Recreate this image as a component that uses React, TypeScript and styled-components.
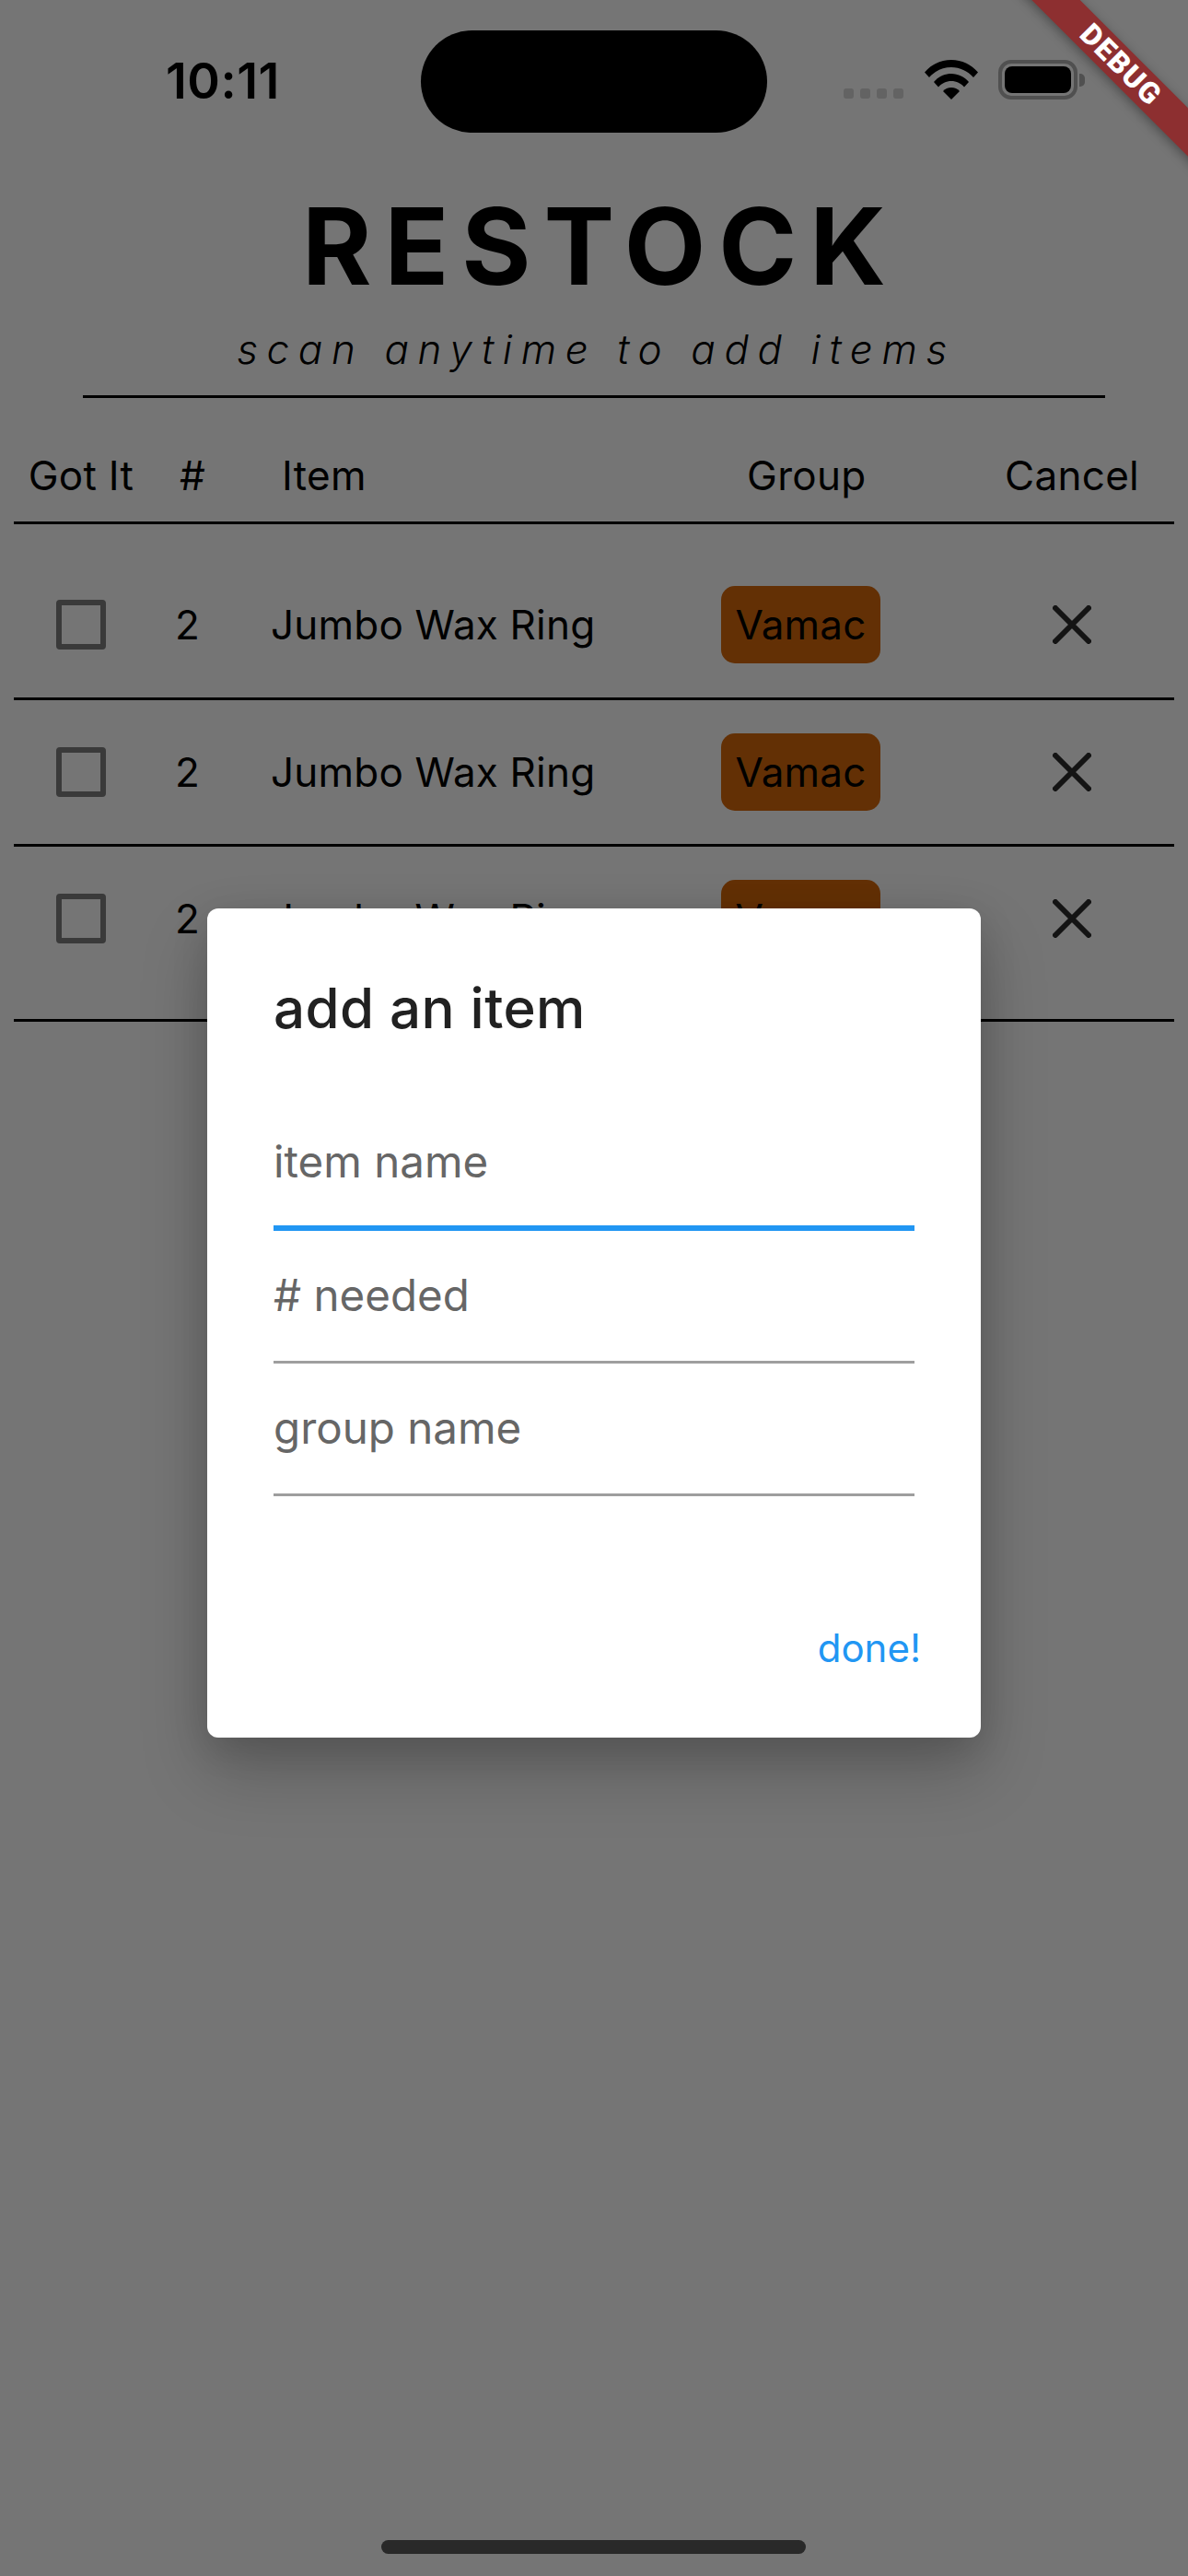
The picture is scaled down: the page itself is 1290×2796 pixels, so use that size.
import React from "react";
import styled, { createGlobalStyle } from "styled-components";

const Global = createGlobalStyle`
  html, body { margin: 0; padding: 0; background: #757575; }
  * { box-sizing: border-box; }
`;

const Screen = styled.div`
  position: relative;
  width: 1290px;
  height: 2796px;
  overflow: hidden;
  background: #757575;
  color: #000;
  font-family: Inter, "Liberation Sans", sans-serif;
  display: flex;
  flex-direction: column;
`;

const StatusBar = styled.div`
  height: 144px;
  padding-top: 33px;
  display: grid;
  grid-template-columns: 457px 376px 1fr;
`;

const Time = styled.div`
  padding: 30px 0 0 180px;
  font-size: 54px;
  line-height: 50px;
  font-weight: 600;
  letter-spacing: 0.5px;
`;

const Island = styled.div`
  height: 111px;
  background: #000;
  border-radius: 56px;
`;

const StatusIcons = styled.div`
  display: flex;
  align-items: flex-start;
  padding: 32px 0 0 83px;
`;

const Dots = styled.div`
  display: flex;
  gap: 7px;
  margin: 31px 23px 0 0;
`;

const Dot = styled.span`
  width: 11px;
  height: 11px;
  border-radius: 3px;
  background: #636363;
`;

const Battery = styled.div`
  position: relative;
  width: 86px;
  height: 43px;
  margin-left: 22px;
  border: 4px solid #505050;
  border-radius: 14px;
  padding: 3px;
  &::after {
    content: "";
    position: absolute;
    right: -12px;
    top: 11px;
    width: 6px;
    height: 14px;
    background: #505050;
    border-radius: 0 5px 5px 0;
  }
`;

const BatteryFill = styled.div`
  height: 100%;
  background: #000;
  border-radius: 8px;
`;

const Title = styled.h1`
  margin: 59px 0 0;
  text-align: center;
  font-size: 115px;
  line-height: 130px;
  font-weight: 700;
  letter-spacing: 14px;
  padding-left: 14px;
`;

const Subtitle = styled.div`
  margin-top: 18px;
  padding-left: 5px;
  text-align: center;
  font-size: 44px;
  line-height: 56px;
  font-style: italic;
  font-weight: 300;
  letter-spacing: 9.6px;
`;

const Rule = styled.div`
  margin: 22px 90px 0;
  height: 3px;
  background: #000;
`;

const Table = styled.div`
  margin: 24px 15px 0;
`;

const HeaderRow = styled.div`
  display: grid;
  grid-template-columns: 146px 135px 487px 270px 222px;
  align-items: center;
  height: 113px;
  padding-top: 10px;
  border-bottom: 3px solid #000;
  font-size: 44px;
  letter-spacing: 0.3px;
`;

const Rows = styled.div`
  padding: 29px 0 31px;
  border-bottom: 3px solid #000;
`;

const Row = styled.div`
  display: grid;
  grid-template-columns: 145px 134px 489px 270px 222px;
  align-items: center;
  height: 159px;
  font-size: 44px;
  letter-spacing: 0.2px;
  & + & {
    border-top: 3px solid #000;
  }
`;

const Cell = styled.div<{ $center?: boolean; $inset?: number }>`
  display: flex;
  justify-content: ${(p) => (p.$center ? "center" : "flex-start")};
  padding-left: ${(p) => p.$inset ?? 0}px;
`;

const Check = styled.span`
  width: 54px;
  height: 54px;
  border: 6px solid #3a3a3a;
  border-radius: 4px;
`;

const Badge = styled.span`
  width: 173px;
  height: 84px;
  display: flex;
  align-items: center;
  justify-content: center;
  background: #633005;
  border-radius: 15px;
`;

const Dialog = styled.div`
  position: absolute;
  left: 225px;
  top: 986px;
  width: 840px;
  height: 900px;
  background: #fff;
  border-radius: 12px;
  box-shadow: 0 36px 72px rgba(0, 0, 0, 0.22), 0 10px 40px rgba(0, 0, 0, 0.12);
  padding: 72px 72px 0;
  display: flex;
  flex-direction: column;
`;

const DialogTitle = styled.div`
  font-size: 60px;
  line-height: 72px;
  font-weight: 500;
  color: #212121;
  letter-spacing: 0.45px;
`;

const Field = styled.div<{ $focused?: boolean }>`
  height: 144px;
  display: flex;
  align-items: center;
  padding-bottom: 2px;
  font-size: 47.5px;
  color: #666;
  border-bottom: ${(p) => (p.$focused ? "6px solid #2196f3" : "3px solid #9e9e9e")};
`;

const Fields = styled.div`
  margin-top: 62px;
`;

const Done = styled.div`
  margin: 140px -7px 0 0;
  text-align: right;
  font-size: 42px;
  line-height: 50px;
  color: #2196f3;
`;

const HomeIndicator = styled.div`
  position: absolute;
  left: 414px;
  bottom: 24px;
  width: 461px;
  height: 15px;
  background: #292929;
  border-radius: 8px;
`;

const Banner = styled.div`
  position: absolute;
  left: 1017px;
  top: 52px;
  width: 400px;
  height: 37px;
  transform: rotate(45deg);
  background: #8d2f30;
  box-shadow: 0 3px 12px rgba(0, 0, 0, 0.35);
  color: #fff;
  font-family: Roboto, Inter, sans-serif;
  font-size: 32px;
  font-weight: 900;
  line-height: 37px;
  text-align: center;
  letter-spacing: 1.5px;
`;

const Wifi = () => (
  <svg width="58" height="43" viewBox="0 0 58 43" fill="#000">
    <path d="M0 13.5C7.5 5 17.5 0 29 0s21.500 5 29 13.500l-5 5.500C46.500 12 38.500 8 29 8S11.500 12 5 19z" />
    <path d="M10 24C14.500 18.500 21.500 15 29 15s14.500 3.500 19 9l-5 5.500c-3.500-4-8.500-6.500-14-6.500s-10.500 2.500-14 6.500z" />
    <path d="M20 34c2.200-2.600 5.400-4 9-4s6.800 1.400 9 4l-9 9z" />
  </svg>
);

const CloseIcon = () => (
  <svg width="42" height="42" viewBox="0 0 42 42" fill="none" stroke="#141414" strokeWidth="6" strokeLinecap="round">
    <path d="M3 3l36 36M39 3L3 39" />
  </svg>
);

const items = [0, 1, 2];

export default function App() {
  return (
    <Screen>
      <Global />
      <StatusBar>
        <Time>10:11</Time>
        <Island />
        <StatusIcons>
          <Dots>
            <Dot />
            <Dot />
            <Dot />
            <Dot />
          </Dots>
          <Wifi />
          <Battery>
            <BatteryFill />
          </Battery>
        </StatusIcons>
      </StatusBar>
      <Title>RESTOCK</Title>
      <Subtitle>scan anytime to add items</Subtitle>
      <Rule />
      <Table>
        <HeaderRow>
          <Cell $center>Got It</Cell>
          <Cell $inset={34}>#</Cell>
          <Cell $inset={10}>Item</Cell>
          <Cell $inset={28}>Group</Cell>
          <Cell $center>Cancel</Cell>
        </HeaderRow>
        <Rows>
          {items.map((i) => (
            <Row key={i}>
              <Cell $center>
                <Check />
              </Cell>
              <Cell $inset={30}>2</Cell>
              <Cell>Jumbo Wax Ring</Cell>
              <Cell>
                <Badge>Vamac</Badge>
              </Cell>
              <Cell $center>
                <CloseIcon />
              </Cell>
            </Row>
          ))}
        </Rows>
      </Table>
      <Dialog>
        <DialogTitle>add an item</DialogTitle>
        <Fields>
          <Field $focused>item name</Field>
          <Field># needed</Field>
          <Field>group name</Field>
        </Fields>
        <Done>done!</Done>
      </Dialog>
      <HomeIndicator />
      <Banner>DEBUG</Banner>
    </Screen>
  );
}
